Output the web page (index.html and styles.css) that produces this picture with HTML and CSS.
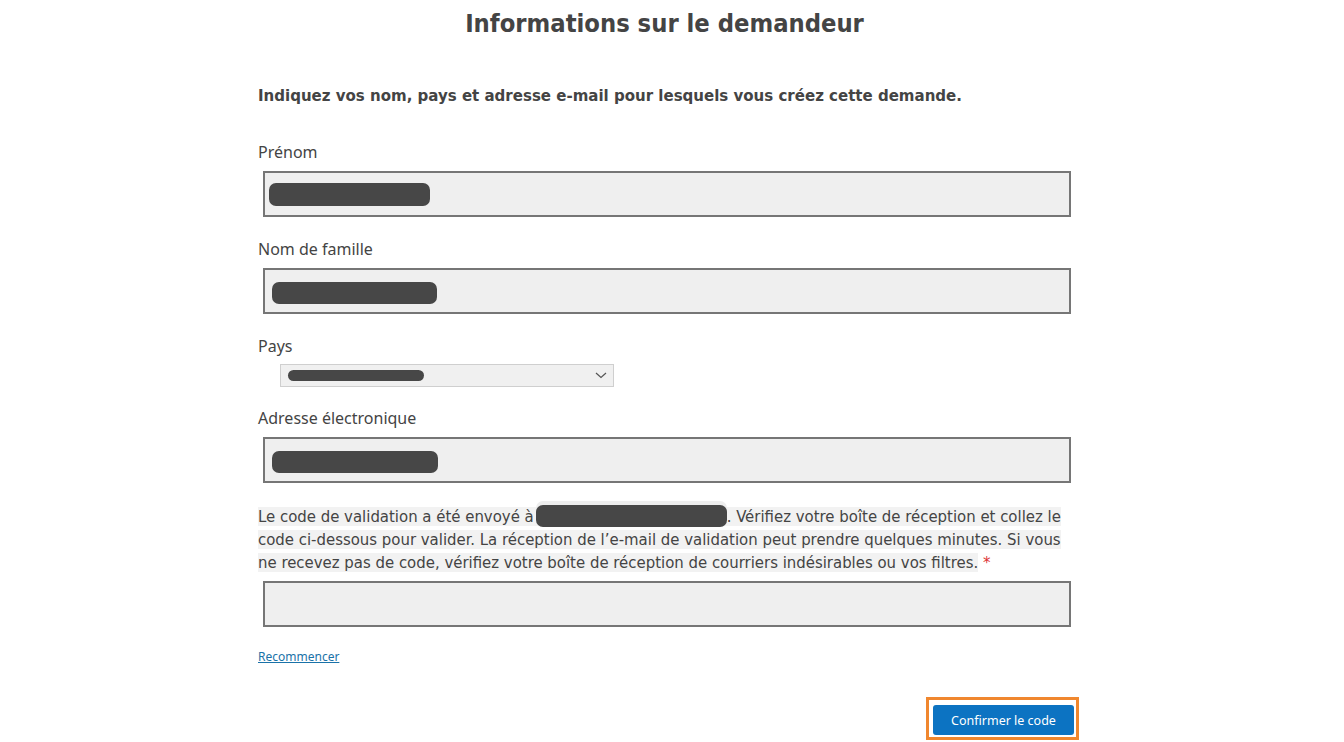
FILE: index.html
```html
<!DOCTYPE html>
<html lang="fr">
<head>
    <meta charset="UTF-8">
    <meta name="viewport" content="width=device-width, initial-scale=1.0">
    <title>Informations sur le demandeur</title>
    <link rel="stylesheet" href="styles.css">
</head>
<body>
    <div class="container">
        <h1>Informations sur le demandeur</h1>

        <p class="intro">Indiquez vos nom, pays et adresse e-mail pour lesquels vous créez cette demande.</p>

        <div class="field">
            <label class="label">Prénom</label>
            <div class="input"><span class="masked" style="width: 161px"></span></div>
        </div>

        <div class="field">
            <label class="label">Nom de famille</label>
            <div class="input"><span class="masked masked-b" style="width: 165px"></span></div>
        </div>

        <div class="field field-select">
            <label class="label">Pays</label>
            <div class="select">
                <span class="masked masked-small" style="width: 136px"></span>
                <svg class="chevron" width="12" height="7" viewBox="0 0 12 7">
                    <path d="M1 1l5 4.5L11 1" fill="none" stroke="#555" stroke-width="1.2"/>
                </svg>
            </div>
        </div>

        <div class="field field-last">
            <label class="label">Adresse électronique</label>
            <div class="input"><span class="masked masked-b" style="width: 166px"></span></div>
        </div>

        <p class="notice"><span class="hl">Le code de validation a été envoyé à<span class="masked-inline"></span>. Vérifiez votre boîte de réception et collez le code ci-dessous pour valider. La réception de l’e-mail de validation peut prendre quelques minutes. Si vous ne recevez pas de code, vérifiez votre boîte de réception de courriers indésirables ou vos filtres.</span> <span class="required">*</span></p>
        <div class="input"></div>

        <a href="#" class="restart">Recommencer</a>

        <div class="actions">
            <span class="focus-ring">
                <button class="confirm-btn">Confirmer le code</button>
            </span>
        </div>
    </div>
</body>
</html>
```

FILE: styles.css
```css
body {
    margin: 0;
    padding: 0 15px 0 0;
    background: #fff;
    color: #444;
    font-family: "Noto Sans", sans-serif;
}
.container {
    width: 813px;
    margin: 0 auto;
}
h1 {
    margin: 8px 0 0;
    font-family: "DejaVu Sans Condensed", "DejaVu Sans", sans-serif;
    font-size: 25.3px;
    line-height: 32px;
    font-weight: bold;
    text-align: center;
    color: #444;
}
.intro {
    margin: 43px 0 34px;
    font-family: "DejaVu Sans Condensed", "DejaVu Sans", sans-serif;
    font-size: 16.7px;
    line-height: 24px;
    font-weight: bold;
    color: #444;
}
.field {
    margin-bottom: 21px;
}
.field-last {
    margin-bottom: 0;
}
.label {
    display: block;
    font-size: 16px;
    line-height: 22px;
    color: #444;
    margin-bottom: 8px;
}
.input {
    box-sizing: border-box;
    height: 46px;
    margin-left: 5px;
    background: #efefef;
    border: 2px solid #767676;
    display: flex;
    align-items: center;
    padding-left: 4px;
}
.masked {
    display: inline-block;
    height: 23px;
    border-radius: 7px;
    background: #474747;
}
.masked-b {
    margin-left: 3px;
    height: 22px;
    margin-top: 4px;
}
.field-select {
    margin-bottom: 20px;
}
.field-select .label {
    margin-bottom: 7px;
}
.select {
    box-sizing: border-box;
    width: 334px;
    height: 23px;
    margin-left: 22px;
    background: #f0f0f0;
    border: 1px solid #cfcfcf;
    display: flex;
    align-items: center;
    justify-content: space-between;
    padding: 0 6px 0 7px;
}
.masked-small {
    height: 11px;
    border-radius: 6px;
}
.chevron {
    display: block;
}
.notice {
    margin: 22px 0 7px;
    font-family: "DejaVu Sans Condensed", "DejaVu Sans", sans-serif;
    font-size: 16.6px;
    line-height: 23px;
    color: #444;
}
.hl {
    background: #f2f2f2;
}
.masked-inline {
    display: inline-block;
    width: 191px;
    height: 22px;
    margin-left: 2px;
    border-radius: 7px;
    background: #474747;
    vertical-align: -5px;
    box-shadow: 0 -4px 0 #eeeeee;
}
.required {
    color: #d33;
}
.restart {
    display: inline-block;
    margin-top: 21px;
    font-size: 12px;
    line-height: 18px;
    color: #1a72a8;
}
.actions {
    display: flex;
    justify-content: flex-end;
    margin: 31px -8px 0 0;
}
.focus-ring {
    display: flex;
    border: 3px solid #f0872e;
    padding: 5px 2px 2px 4px;
}
.confirm-btn {
    width: 141px;
    height: 30px;
    padding: 0;
    background: #0c73c2;
    border: none;
    border-radius: 3px;
    font-family: "Noto Sans", sans-serif;
    font-size: 12.5px;
    color: #fff;
    cursor: pointer;
}
```
